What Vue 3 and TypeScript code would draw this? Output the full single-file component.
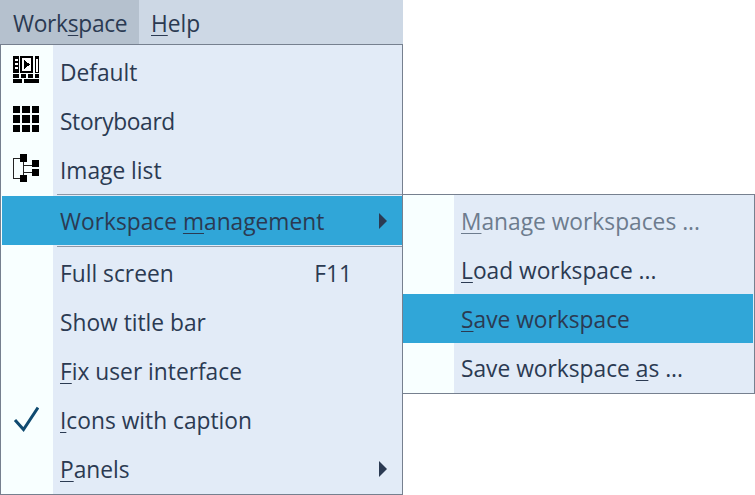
<script setup lang="ts">
const text = "menu";
</script>

<template>
  <div class="root" :data-k="text">
    <div class="bar">
      <div class="top active">Work<u>s</u>pace</div>
      <div class="top help"><u>H</u>elp</div>
    </div>
    <div class="menu">
      <div class="item">
        <span class="ic">
          <svg width="28" height="28" viewBox="0 0 28 28" shape-rendering="crispEdges">
            <path d="M1 0h6v17H1zM2 3h4M2 6h4M2 9h4M2 12h4M2 15h4" fill="#000" />
            <path d="M2.500 3h3v2h-3zM2.500 7h3v2h-3zM2.500 11h3v2h-3z" fill="#fff" />
            <path d="M9 1h11v15H9z" fill="#fff" stroke="#000" stroke-width="2" />
            <path d="M12 4l6 4.500-6 4.500z" fill="#000" />
            <path d="M23.500 2.500h3v14h-3z" fill="#fff" stroke="#000" stroke-width="1" />
            <path d="M23 0h4v3h-4zM1 18h6v4H1zM9 18h5v4H9zM16 18h5v4h-5zM23 18h4v4h-4zM1 23h9v4H1zM12 23h15v4H12z" fill="#000" />
          </svg>
        </span>
        <span class="lb">Default</span>
      </div>
      <div class="item">
        <span class="ic">
          <svg width="28" height="28" viewBox="0 0 28 28" shape-rendering="crispEdges">
            <path d="M1 1h7v7H1zM10 1h8v7h-8zM20 1h7v7h-7zM1 10h7v8H1zM10 10h8v8h-8zM20 10h7v8h-7zM1 20h7v7H1zM10 20h8v7h-8zM20 20h7v7h-7z" fill="#000" />
          </svg>
        </span>
        <span class="lb tight">Storyboard</span>
      </div>
      <div class="item">
        <span class="ic">
          <svg width="28" height="28" viewBox="0 0 28 28" shape-rendering="crispEdges">
            <path d="M8 4.500H1.500v20H8M11.500 8v13M11.500 11.500H20M11.500 18.500H20" fill="none" stroke="#222" stroke-width="1.500" />
            <path d="M8 0h7v8H8zM20 6h7v7h-7zM20 15h7v7h-7zM8 21h7v7H8z" fill="#000" />
          </svg>
        </span>
        <span class="lb">Image list</span>
      </div>
      <div class="sep"></div>
      <div class="item hot">
        <span class="ic"></span>
        <span class="lb">Workspace <u>m</u>anagement</span>
        <span class="arrow"></span>
      </div>
      <div class="sep"></div>
      <div class="item">
        <span class="ic"></span>
        <span class="lb">Full screen</span>
        <span class="key">F11</span>
      </div>
      <div class="item">
        <span class="ic"></span>
        <span class="lb">Show title bar</span>
      </div>
      <div class="item">
        <span class="ic"></span>
        <span class="lb"><u>F</u>ix user interface</span>
      </div>
      <div class="item">
        <span class="ic">
          <svg class="check" width="26" height="26" viewBox="0 0 26 26">
            <path d="M2 14l8.500 9.500L25 1.500" fill="none" stroke="#0f4a70" stroke-width="3" />
          </svg>
        </span>
        <span class="lb"><u>I</u>cons with caption</span>
      </div>
      <div class="item">
        <span class="ic"></span>
        <span class="lb"><u>P</u>anels</span>
        <span class="arrow"></span>
      </div>
    </div>
    <div class="menu sub">
      <div class="item dis">
        <span class="ic"></span>
        <span class="lb"><u>M</u>anage workspaces ...</span>
      </div>
      <div class="item">
        <span class="ic"></span>
        <span class="lb"><u>L</u>oad workspace ...</span>
      </div>
      <div class="item hot">
        <span class="ic"></span>
        <span class="lb"><u>S</u>ave workspace</span>
      </div>
      <div class="item">
        <span class="ic"></span>
        <span class="lb">Save workspace <u>a</u>s ...</span>
      </div>
    </div>
  </div>
</template>

<style>
html, body { background: #fff; }
</style>

<style scoped>
.root {
  position: relative;
  width: 755px;
  height: 495px;
  overflow: hidden;
  font-family: "Open Sans", "Noto Sans", sans-serif;
  font-size: 22.75px;
  color: #2b3a52;
}
u { text-underline-offset: 3px; text-decoration-thickness: 1px; }
.bar {
  display: flex;
  width: 403px;
  height: 44px;
  background: #cdd8e5;
}
.top {
  display: flex;
  align-items: center;
  padding: 2px 12px 0 13px;
}
.top.active { background: #b5c1ce; width: 114px; letter-spacing: -0.3px; white-space: nowrap; }
.top.help { padding-left: 12px; }
.tight { letter-spacing: -0.35px; }
.menu {
  display: flex;
  flex-direction: column;
  width: 403px;
  height: 451px;
  box-sizing: border-box;
  border: 1px solid #76808f;
  padding: 2px 0 0 1px;
  background: linear-gradient(to right, #f8ffff 52px, #e2ebf7 52px);
}
.sub {
  position: absolute;
  left: 402px;
  top: 194px;
  width: 353px;
  height: 200px;
  padding: 1px 1px 0 0;
  background: linear-gradient(to right, #f8ffff 51px, #e2ebf7 51px);
}
.item {
  flex: none;
  display: flex;
  align-items: center;
  height: 49px;
  padding-right: 15px;
}
.hot { background: #30a6d8; }
.dis { color: #6d7c8e; }
.ic {
  flex: none;
  display: flex;
  align-items: center;
  justify-content: center;
  width: 48px;
  height: 100%;
}
.ic svg { margin-bottom: 3px; }
.ic .check { margin-bottom: 1px; }
.sub .ic { width: 51px; }
.lb { flex: 1; padding: 2px 0 0 10px; white-space: nowrap; }
.sub .lb { padding-left: 7px; }
.key { margin-right: 35px; padding-top: 2px; }
.arrow {
  flex: none;
  width: 0;
  height: 0;
  border-left: 8px solid #2b3a52;
  border-top: 8px solid transparent;
  border-bottom: 8px solid transparent;
}
.sep {
  flex: none;
  height: 1px;
  margin: 0 0 0 55px;
  background: #8d97a6;
}
.sep + .item { margin-top: 1px; }
.hot + .sep { margin-top: 1px; }
</style>
